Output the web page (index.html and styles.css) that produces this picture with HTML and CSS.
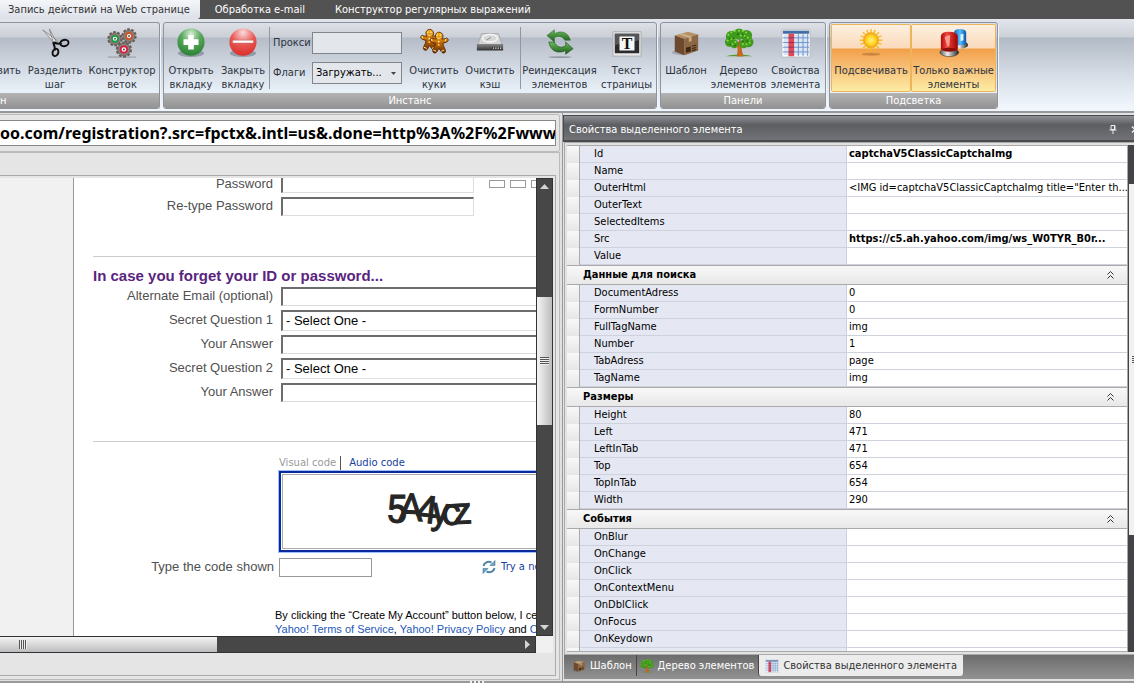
FILE: index.html
```html
<!DOCTYPE html>
<html lang="ru">
<head>
<meta charset="utf-8">
<title>Запись действий на Web странице</title>
<link rel="stylesheet" href="styles.css">
</head>
<body>
<svg class="defs" aria-hidden="true">
  <defs>
    <radialGradient id="gGreen" cx=".5" cy=".2" r=".9"><stop offset="0" stop-color="#d9efd9"/><stop offset=".4" stop-color="#5aa75c"/><stop offset="1" stop-color="#1f7a2a"/></radialGradient>
    <radialGradient id="gRed" cx=".5" cy=".15" r=".95"><stop offset="0" stop-color="#fbdcdc"/><stop offset=".45" stop-color="#e75a58"/><stop offset="1" stop-color="#d8241f"/></radialGradient>
    <radialGradient id="gSun"><stop offset="0" stop-color="#fff27a"/><stop offset=".6" stop-color="#ffd428"/><stop offset="1" stop-color="#f2a010"/></radialGradient>
    <linearGradient id="gCookie" x2="0" y2="1"><stop offset="0" stop-color="#ffb81c"/><stop offset=".5" stop-color="#c46a08"/><stop offset="1" stop-color="#6d2f04"/></linearGradient>
    <linearGradient id="gArrow" x2="0" y2="1"><stop offset="0" stop-color="#6cbc5a"/><stop offset="1" stop-color="#19591c"/></linearGradient>
    <linearGradient id="gLampR" x2="1"><stop offset="0" stop-color="#b00808"/><stop offset=".35" stop-color="#f04a40"/><stop offset="1" stop-color="#a00000"/></linearGradient>
    <linearGradient id="gLampB" x2="1"><stop offset="0" stop-color="#1268c0"/><stop offset=".5" stop-color="#58c0ff"/><stop offset="1" stop-color="#0a50a8"/></linearGradient>
    <linearGradient id="gBase" x2="1"><stop offset="0" stop-color="#555"/><stop offset=".4" stop-color="#eee"/><stop offset="1" stop-color="#222"/></linearGradient>
    <linearGradient id="gDrive" x2="0" y2="1"><stop offset="0" stop-color="#8a8a8a"/><stop offset="1" stop-color="#333"/></linearGradient>
    <symbol id="cog" viewBox="0 0 16 16">
      <circle cx="8" cy="8" r="6.6" fill="none" stroke="#665c58" stroke-width="2.2" stroke-dasharray="2.6 1.55"/>
      <circle cx="8" cy="8" r="6" fill="#8d7d77" stroke="#625752" stroke-width=".6"/>
      <circle cx="8" cy="8" r="3.9" fill="currentColor"/>
      <circle cx="8" cy="8" r="2.1" fill="#fff"/><circle cx="8" cy="8" r="1" fill="#555"/>
    </symbol>
    <symbol id="man" viewBox="0 0 22 28">
      <path d="M11 1.5c2.7 0 4.6 1.8 4.6 4.2 0 1.2-.4 2.2-1.2 3 1.6.3 3.3-.2 4.7-.8 2.1-.2 2.8 2.7.9 3.7-1.5.8-3 1.4-4.5 1.6.1 2 .7 3.6 1.8 5.4.8 1.5 1.6 3.3.5 4.4-1.6 1.5-3.5.4-4.3-1.2L11 18.500l-1.5 3.300c-.8 1.600-2.700 2.700-4.300 1.200-1.100-1.100-.3-2.900.5-4.400 1.100-1.800 1.700-3.400 1.800-5.400-1.500-.2-3-.8-4.500-1.600-1.900-1-1.200-3.900.9-3.700 1.400.6 3.100 1.100 4.700.8-.8-.8-1.200-1.800-1.200-3 0-2.400 1.900-4.200 3.600-4.200z" fill="url(#gCookie)" stroke="#5c2c06" stroke-width="1"/>
      <path d="M8.800 6.800c1 1.600 3.400 1.600 4.400 0" fill="none" stroke="#fff2b0" stroke-width=".9"/>
      <circle cx="9.300" cy="4.600" r=".8" fill="#fff2b0"/><circle cx="12.800" cy="4.600" r=".8" fill="#fff2b0"/>
      <circle cx="11" cy="11.500" r="1" fill="#fff2b0"/><circle cx="11" cy="15" r="1" fill="#ffd65c"/>
      <path d="M3.200 8.600l.8 2.600M18.800 8.600l-.8 2.600M5.200 20.500l3 1.300M16.800 20.500l-3 1.300" stroke="#fff2b0" stroke-width="1"/>
    </symbol>
    <symbol id="box" viewBox="0 0 32 32">
      <ellipse cx="11" cy="26" rx="10" ry="3" fill="#667" opacity=".35"/>
      <path d="M4 8l14-4 11 3-15 4.500z" fill="#b58f66"/>
      <path d="M4 8l10 3.500V29L4 25z" fill="#6d4a2d"/>
      <path d="M14 11.500L29 7v17L14 29z" fill="#8b6744"/>
      <path d="M8.500 6.700l3-.9 10.500 3.300-3 .9z" fill="#d2b48c"/><path d="M19 10l3-.9v5l-3 .9z" fill="#c9a67c"/>
      <path d="M16.500 21.500l4-1v4l-4 1zM22.500 19.500l4.500-1.200M22.500 22l4.500-1.200M22.500 24.300l4.500-1.200" fill="#3f2816" stroke="#3f2816" stroke-width="1.200"/>
    </symbol>
    <symbol id="tree" viewBox="0 0 32 32">
      <path d="M2 30c8-2 20-2 28 0z" fill="#4f9a25"/>
      <path d="M13.500 30c1-4 1.500-7 .5-11l-5-4 6 1 2-5 1.500 5 5-2-4.500 5.500c-.5 4 .5 7 2 10.500z" fill="#b8621c"/>
      <g fill="#3f9a1d"><circle cx="8" cy="9" r="6"/><circle cx="16" cy="6.500" r="6"/><circle cx="24" cy="8" r="6"/><circle cx="6" cy="15" r="5"/><circle cx="26" cy="15" r="5.500"/><circle cx="11" cy="17" r="4.500"/><circle cx="21" cy="17" r="4.500"/></g>
      <g fill="none" stroke="#83d63f" stroke-width="2" stroke-dasharray="2 2"><path d="M4 8q4-5 9-5M15 3q6-1 10 3M3 14q5-4 10-2M17 8q7-1 11 5M8 18q5-3 6-6M19 17q5 2 9-2"/></g>
      <g fill="none" stroke="#206b12" stroke-width="1.500" stroke-dasharray="2 3"><path d="M5 12q5-3 9 1M14 7q5-3 9 3M19 14q4 1 9-1M6 17q4 3 8 1"/></g>
      <path d="M14 30c2-4 1-7 .5-11l3 0c-.5 4 1 7 3 11z" fill="#c46a20"/>
    </symbol>
    <symbol id="grid" viewBox="0 0 32 32">
      <path d="M1 2h30v29H1z" fill="#fff" stroke="#b9bec8"/>
      <path d="M3 7h26v22H3z" fill="#dbe6f5"/>
      <path d="M2 3h28v3H2z" fill="#426da5"/>
      <path d="M8 6h6v24H8z" fill="#e04858"/>
      <path d="M2 10.500h28M2 15.500h28M2 20.500h28M2 25.500h28M18.500 6v24M23.500 6v24M28.500 6v24" stroke="#6b90c6" stroke-width="1"/>
      <path d="M8 10.500h6M8 15.500h6M8 20.500h6M8 25.500h6" stroke="#b01c34"/>
    </symbol>
  </defs>
</svg>
<div class="app">
  <nav class="tabs">
    <button class="tab tab-on" type="button">Запись действий на Web странице</button>
    <button class="tab" type="button">Обработка e-mail</button>
    <button class="tab" type="button">Конструктор регулярных выражений</button>
  </nav>

  <header class="ribbon">
    <section class="group group-cut">
      <div class="tools">
        <button class="tool w-cut" type="button"><span class="pic"></span>вить</button>
        <button class="tool w-split" type="button">
          <svg class="pic" viewBox="0 0 32 32"><path d="M3 2l13 15 3-3zM10 1l5 17 3-2z" fill="#eee" stroke="#777" stroke-width=".8"/><path d="M15 15q3 3 8 1M14 15q2 5 2 9" stroke="#111" stroke-width="2.200" fill="none"/><ellipse cx="26" cy="16" rx="4.500" ry="3.300" fill="none" stroke="#111" stroke-width="2" transform="rotate(-15 26 16)"/><ellipse cx="16.500" cy="26" rx="3" ry="4" fill="none" stroke="#111" stroke-width="2" transform="rotate(20 16.500 26)"/></svg>
          Разделить шаг</button>
        <button class="tool w-branch" type="button">
          <svg class="pic" viewBox="0 0 32 32"><path d="M1 31h30" stroke="#8e949c"/><g color="#c8552e"><use href="#cog" x="15" y="0" width="17" height="17"/></g><g color="#1c9a4a"><use href="#cog" x="0" y="3" width="17" height="17"/></g><g color="#d4204a"><use href="#cog" x="9" y="14" width="18" height="18"/></g></svg>
          Конструктор веток</button>
      </div>
      <h2 class="caption caption-cut">н</h2>
    </section>

    <section class="group">
      <div class="tools">
        <button class="tool w-open" type="button">
          <svg class="pic" viewBox="0 0 32 32"><ellipse cx="16" cy="27" rx="14" ry="4" fill="#456" opacity=".4"/><circle cx="16" cy="15" r="14.500" fill="url(#gGreen)"/><path d="M13 7.500h6V12h5v6h-5v5h-6v-5H8v-6h5z" fill="#fff"/></svg>
          Открыть вкладку</button>
        <button class="tool w-open" type="button">
          <svg class="pic" viewBox="0 0 32 32"><ellipse cx="16" cy="27" rx="14" ry="4" fill="#456" opacity=".4"/><circle cx="16" cy="15" r="14.500" fill="url(#gRed)"/><path d="M5 13h22v3H5z" fill="#fff" stroke="#b77" stroke-width=".6"/></svg>
          Закрыть вкладку</button>
        <div class="fields">
          <label for="proxy">Прокси</label><input id="proxy" type="text">
          <label for="flags">Флаги</label>
          <span class="combo"><select id="flags"><option>Загружать...</option></select><svg viewBox="0 0 5 3"><path d="M0 0h5L2.500 3z" fill="#444"/></svg></span>
        </div>
        <button class="tool w-clear" type="button">
          <svg class="pic" viewBox="0 0 32 32"><use href="#man" x="0" y="0" width="22" height="28"/><use href="#man" x="10" y="3" width="22" height="28"/></svg>
          Очистить куки</button>
        <button class="tool w-clear" type="button">
          <svg class="pic" viewBox="0 0 32 32"><path d="M7 6h18l4 12H3z" fill="#d4d6d8" stroke="#a5a8ac"/><ellipse cx="16" cy="11" rx="8" ry="4" fill="none" stroke="#f5f5f5" stroke-width="1.500"/><path d="M12 13l5-3" stroke="#888"/><path d="M2 17h28v7H2z" fill="url(#gDrive)"/><path d="M18 20.500h10v2H18z" fill="#111"/><path d="M19 21.500h9" stroke="#fff" stroke-width="1.500" stroke-dasharray="1.500 1"/></svg>
          Очистить кэш</button>
        <button class="tool w-index ruled" type="button">
          <svg class="pic" viewBox="0 0 32 32"><ellipse cx="16" cy="31" rx="13" ry="1" fill="#556" opacity=".45"/><path d="M10 2v4c8-4 15-1 17 7h-6c-2-4-6-5-11-3v5L2 8z" fill="url(#gArrow)" stroke="#286a27" stroke-width=".6"/><path d="M22 28v-4c-8 4-16 1-18-9h6c2 5 7 7 12 4v-4l8 7z" fill="url(#gArrow)" stroke="#164a18" stroke-width=".6"/></svg>
          Реиндексация элементов</button>
        <button class="tool w-text" type="button">
          <svg class="pic" viewBox="0 0 32 32"><path d="M1 4h30v26H1z" fill="#e8e8e8" stroke="#aaa"/><path d="M3 6h26v21H3z" fill="#2b2b2e"/><path d="M3 6h26v7L3 18z" fill="#55565a"/><path d="M8 9h16v15H8z" fill="#f7f7f7"/><text x="16" y="22" text-anchor="middle" class="glyph">T</text></svg>
          Текст страницы</button>
      </div>
      <h2 class="caption">Инстанс</h2>
    </section>

    <section class="group">
      <div class="tools">
        <button class="tool w-box" type="button"><svg class="pic"><use href="#box"/></svg>Шаблон</button>
        <button class="tool w-tree" type="button"><svg class="pic"><use href="#tree"/></svg>Дерево элементов</button>
        <button class="tool w-tree" type="button"><svg class="pic"><use href="#grid"/></svg>Свойства элемента</button>
      </div>
      <h2 class="caption">Панели</h2>
    </section>

    <section class="group">
      <div class="tools tools-hot">
        <button class="tool hot w-light" type="button" aria-pressed="true">
          <svg class="pic" viewBox="0 0 32 32"><ellipse cx="16" cy="28" rx="10" ry="1.500" fill="#a4642a" opacity=".5"/><path d="M16 1v24M4 13h24M7.500 4.500l17 17M24.500 4.500l-17 17M11.500 2l9 22M20.500 2l-9 22M5 8.500l22 9M5 17.500l22-9" stroke="#f6bc20" stroke-width="1.500"/><circle cx="16" cy="13" r="8" fill="url(#gSun)" stroke="#f3a91d"/></svg>
          Подсвечивать</button>
        <button class="tool hot w-only" type="button" aria-pressed="true">
          <svg class="pic" viewBox="0 0 32 32"><ellipse cx="23" cy="18" rx="8" ry="4" fill="url(#gBase)"/><path d="M16 5q0-4 6-4 7 0 7 4v12q-6 3-13 0z" fill="url(#gLampB)"/><path d="M23 7l3-1v7l-3 1z" fill="#e0f6ff"/><ellipse cx="11" cy="26" rx="10" ry="4.500" fill="url(#gBase)" stroke="#333" stroke-width=".6"/><path d="M2 9q0-5 8-5 10 0 10 5v14q-9 4-18 0z" fill="url(#gLampR)"/><path d="M6 10q3-3 6-2l-1 11-2 1z" fill="#ffb0a6" opacity=".8"/><ellipse cx="11" cy="23" rx="8" ry="2" fill="#8c0c0c"/></svg>
          Только важные элементы</button>
      </div>
      <h2 class="caption">Подсветка</h2>
    </section>
  </header>

  <main class="work">
    <section class="browser">
      <div class="address"><input type="text" aria-label="Адрес" value="oo.com/registration?.src=fpctx&amp;.intl=us&amp;.done=http%3A%2F%2Fwww"></div>
      <div class="frame">
        <div class="view">
          <div class="page">
            <form class="form">
              <div class="row row-first"><label for="pw">Password</label><input id="pw" class="short" type="password"><span class="meter"><i></i><i></i><i></i></span></div>
              <div class="row"><label for="pw2">Re-type Password</label><input id="pw2" class="short" type="password"></div>
              <h3 class="heading">In case you forget your ID or password...</h3>
              <div class="row"><label for="mail">Alternate Email (optional)</label><input id="mail" type="text"></div>
              <div class="row"><label for="q1">Secret Question 1</label><select id="q1"><option>- Select One -</option></select></div>
              <div class="row"><label for="a1">Your Answer</label><input id="a1" type="text"></div>
              <div class="row"><label for="q2">Secret Question 2</label><select id="q2"><option>- Select One -</option></select></div>
              <div class="row"><label for="a2">Your Answer</label><input id="a2" type="text"></div>
              <div class="verify">
                <p class="modes"><span>Visual code</span><a href="#audio">Audio code</a></p>
                <div class="captcha"><svg viewBox="0 0 292 75" role="img" aria-label="5A4ycz"><g class="code"><text x="102" y="49">5</text><text x="115" y="47" transform="rotate(3 127 40)">A</text><text x="133" y="49" transform="rotate(7 143 40)">4</text><text x="149" y="50" transform="rotate(6 158 40)">y</text><text x="159" y="51" transform="rotate(-4 172 40)">c</text><text x="171" y="50" transform="rotate(-3 182 40)">z</text></g></svg></div>
              </div>
              <div class="row row-code"><label for="code">Type the code shown</label><input id="code" class="code-box" type="text">
                <a class="again" href="#new"><svg viewBox="0 0 14 14"><path d="M1.500 6C2 2.500 6 .8 9.500 2.500M12.500 8C12 11.500 8 13.200 4.500 11.500" fill="none" stroke="#4f86a8" stroke-width="2"/><path d="M13 .5v5H8zM1 13.500v-5h5z" fill="#6fa3c0" stroke="#3d7697" stroke-width=".6"/></svg>Try a ne</a></div>
              <p class="terms">By clicking the “Create My Account” button below, I ce<br><a href="#tos">Yahoo! Terms of Service</a>, <a href="#privacy">Yahoo! Privacy Policy</a> and <a href="#comm">C</a></p>
            </form>
          </div>
          <div class="vbar"><svg class="up" viewBox="0 0 9 5"><path d="M0 5h9L4.500 0z"/></svg><div class="vthumb"><i></i></div><svg class="down" viewBox="0 0 9 5"><path d="M0 0h9L4.500 5z"/></svg></div>
          <div class="hbar"><div class="hthumb"><i></i></div><svg class="right" viewBox="0 0 5 9"><path d="M0 0v9l5-4.500z"/></svg></div>
        </div>
      </div>
    </section>

    <section class="props">
      <h2 class="title"><span>Свойства выделенного элемента</span>
        <button type="button" aria-label="Закрепить"><svg viewBox="0 0 8 9"><path d="M2 .5h4v4H2zM5.500 .5v4M.5 5h7M4 5v4" fill="none" stroke="#eee"/></svg></button>
        <button type="button" class="close" aria-label="Закрыть"><svg viewBox="0 0 8 8"><path d="M1 1l6 6M7 1L1 7" stroke="#eee" stroke-width="1.500"/></svg></button></h2>
      <div class="sheet">
        <div class="scroll">
          <table class="list">
            <colgroup><col class="c-gutter"><col class="c-name"><col></colgroup>
            <tbody>
              <tr><td></td><th scope="row">Id</th><td class="strong">captchaV5ClassicCaptchaImg</td></tr>
              <tr><td></td><th scope="row">Name</th><td></td></tr>
              <tr><td></td><th scope="row">OuterHtml</th><td>&lt;IMG id=captchaV5ClassicCaptchaImg title="Enter th...</td></tr>
              <tr><td></td><th scope="row">OuterText</th><td></td></tr>
              <tr><td></td><th scope="row">SelectedItems</th><td></td></tr>
              <tr><td></td><th scope="row">Src</th><td class="strong">https://c5.ah.yahoo.com/img/ws_W0TYR_B0r...</td></tr>
              <tr><td></td><th scope="row">Value</th><td></td></tr>
            </tbody>
            <tbody>
              <tr class="cat"><th colspan="3" scope="rowgroup"><button type="button">Данные для поиска<svg viewBox="0 0 7 8"><path d="M.5 3.500l3-3 3 3M.5 7.500l3-3 3 3"/></svg></button></th></tr>
              <tr><td></td><th scope="row">DocumentAdress</th><td>0</td></tr>
              <tr><td></td><th scope="row">FormNumber</th><td>0</td></tr>
              <tr><td></td><th scope="row">FullTagName</th><td>img</td></tr>
              <tr><td></td><th scope="row">Number</th><td>1</td></tr>
              <tr><td></td><th scope="row">TabAdress</th><td>page</td></tr>
              <tr><td></td><th scope="row">TagName</th><td>img</td></tr>
            </tbody>
            <tbody>
              <tr class="cat"><th colspan="3" scope="rowgroup"><button type="button">Размеры<svg viewBox="0 0 7 8"><path d="M.5 3.500l3-3 3 3M.5 7.500l3-3 3 3"/></svg></button></th></tr>
              <tr><td></td><th scope="row">Height</th><td>80</td></tr>
              <tr><td></td><th scope="row">Left</th><td>471</td></tr>
              <tr><td></td><th scope="row">LeftInTab</th><td>471</td></tr>
              <tr><td></td><th scope="row">Top</th><td>654</td></tr>
              <tr><td></td><th scope="row">TopInTab</th><td>654</td></tr>
              <tr><td></td><th scope="row">Width</th><td>290</td></tr>
            </tbody>
            <tbody>
              <tr class="cat"><th colspan="3" scope="rowgroup"><button type="button">События<svg viewBox="0 0 7 8"><path d="M.5 3.500l3-3 3 3M.5 7.500l3-3 3 3"/></svg></button></th></tr>
              <tr><td></td><th scope="row">OnBlur</th><td></td></tr>
              <tr><td></td><th scope="row">OnChange</th><td></td></tr>
              <tr><td></td><th scope="row">OnClick</th><td></td></tr>
              <tr><td></td><th scope="row">OnContextMenu</th><td></td></tr>
              <tr><td></td><th scope="row">OnDblClick</th><td></td></tr>
              <tr><td></td><th scope="row">OnFocus</th><td></td></tr>
              <tr><td></td><th scope="row">OnKeydown</th><td></td></tr>
              <tr><td></td><th scope="row"></th><td></td></tr>
            </tbody>
          </table>
        </div>
        <div class="edge"><div class="ethumb"><i></i></div></div>
      </div>
      <nav class="docks">
        <button class="dock" type="button"><svg><use href="#box"/></svg>Шаблон</button>
        <button class="dock" type="button"><svg><use href="#tree"/></svg>Дерево элементов</button>
        <button class="dock dock-on" type="button"><svg><use href="#grid"/></svg>Свойства выделенного элемента</button>
      </nav>
    </section>
  </main>
  <footer class="grip"><i></i></footer>
</div>
</body>
</html>
```
FILE: styles.css
```css
* { box-sizing: border-box; }
html, body { height: 100%; }
body { margin: 0; overflow: hidden; font: 11px/14px "DejaVu Sans Condensed", "Noto Sans", sans-serif; color: #1e1e1e; background: #e5e5e5; }
button, input, select { font: inherit; color: inherit; margin: 0; padding: 0; border: 0; border-radius: 0; background: none; appearance: none; }
h2, h3, p { margin: 0; font: inherit; }
svg { flex: none; display: block; }
i { display: block; }
.defs { position: absolute; width: 0; height: 0; }
.app { display: flex; flex-direction: column; height: 100vh; }

/* top tabs */
.tabs { display: flex; flex: none; height: 19px; background: #525252; }
.tab { padding: 0 15px; color: #fff; white-space: nowrap; }
.tab-on { padding: 0 10px 0 8px; color: #333; background: linear-gradient(#f4f6f9, #dde1e8); border-radius: 0 0 3px 0; }

/* ribbon */
.ribbon { display: flex; flex: none; gap: 3px; height: 94px; padding: 3px 0 2px; background: linear-gradient(#e2e6ec, #cdd1d8 18px, #b2bac5 19px, #d5dce5 55px, #f0f6fc 88px); border-bottom: 2px solid #94989c; }
.group { flex: none; display: flex; flex-direction: column; border: 1px solid #8d949e; border-radius: 3px; overflow: hidden; background: linear-gradient(#dde1e6, #cbcfd6 14px, #b5bcc7 15px, #d3dae3 45px, #e9f1f9 70px); box-shadow: 1px 1px 0 #f2f5f8; }
.group-cut { width: 160px; border-left: 0; border-radius: 0 3px 3px 0; }
.group-cut .tools { justify-content: flex-end; }
.tools { display: flex; flex: none; height: 70px; padding: 0 1px; }
.tool { display: flex; flex-direction: column; align-items: center; justify-content: flex-start; flex: none; padding: 4px 0 0; color: #2c3440; line-height: 14px; text-align: center; }
.pic { width: 30px; height: 32px; margin-bottom: 5px; flex: none; }
.caption { flex: none; height: 15px; line-height: 16px; text-align: center; color: #fff; background: linear-gradient(#b4b4b4, #929292); }
.caption-cut { text-align: left; }
.w-cut { width: 30px; } .w-split { width: 62px; } .w-branch { width: 72px; }
.w-open { width: 52px; } .w-clear { width: 56px; } .w-index { width: 78px; } .w-text { width: 57px; }
.w-box { width: 48px; } .w-tree { width: 57px; }
.w-light { width: 80px; } .w-only { width: 85px; }
.ruled { border-left: 1px solid #8f97a3; height: 62px; margin-top: 4px; padding-top: 0; margin-left: 2px; }
.fields { display: grid; grid-template-columns: 37px 90px; gap: 8px 2px; align-items: center; align-content: start; height: 62px; margin: 4px 4px 0 0; padding: 5px 0 0 3px; border-left: 1px solid #8f97a3; color: #2c3440; }
.fields input, .fields select { width: 90px; height: 22px; padding: 0 3px; border: 1px solid #82868c; background: #e3e7ec; color: #000; }
.combo { display: flex; align-items: center; }
.combo svg { width: 5px; height: 3px; margin-left: -11px; }
.tools-hot { padding: 1px; gap: 0; }
.hot { padding-top: 2px; border: 1px solid #efb45a; border-radius: 2px; background: linear-gradient(#fdf0df, #fadabb 23px, #f2a04a 24px, #f8c47c 45px, #fff0a8 68px); }
.glyph { font: bold 17px "Liberation Serif", serif; fill: #111; }

/* workspace */
.work { flex: 1; min-height: 0; display: grid; grid-template-columns: minmax(0, 562fr) minmax(0, 572fr); background: #e0e0e0; }
.browser { display: flex; flex-direction: column; min-width: 0; min-height: 0; padding: 1px 2px 1px 0; }
.address { padding: 5px 3px 5px 0; border: 1px solid #bbb; border-left: 0; border-radius: 0 3px 3px 0; background: #e5e5e5; }
.address input { display: block; width: 100%; height: 26px; border: 1px solid #888; border-left: 0; background: #fff; font: bold 16px/22px "Noto Sans", "DejaVu Sans Condensed", sans-serif; color: #000; }
.frame { flex: 1; min-height: 0; padding: 22px 3px 3px 0; border: 1px solid #bbb; border-left: 0; background: #e5e5e5; }
.view { display: grid; grid-template: minmax(0, 1fr) 17px / minmax(0, 1fr) 17px; height: 100%; padding: 2px 2px 22px 0; border: 1px solid #aaa; border-left: 0; }
.page { overflow: hidden; padding-left: 73px; background: #f1f1f1; }
.form { width: 760px; min-height: 100%; padding-left: 19px; border-left: 1px solid #999; background: #fff; color: #505050; font: 13px/18px "Liberation Sans", Arial, sans-serif; }
.row { display: grid; grid-template-columns: 180px 385px; column-gap: 8px; align-items: center; min-height: 24px; }
.row label { text-align: right; }
.row input, .row select { width: 100%; height: 19px; padding: 0 3px; border: 1px solid #ddd; border-top: 2px solid #6c6c6c; border-left: 2px solid #6c6c6c; background: #fff; color: #000; }
.row select { height: 21px; }
.row .short { width: 193px; }
.row-first { grid-template-columns: 180px 193px auto; min-height: 21px; margin-top: -5px; }
.meter { display: flex; gap: 5px; padding-left: 7px; }
.meter i { width: 16px; height: 8px; border: 1px solid #999; }
.heading { margin-top: 38px; padding-top: 11px; border-top: 1px solid #ccc; font-size: 15px; line-height: 16px; font-weight: bold; color: #5a2480; }
.verify { margin-top: 37px; padding: 14px 0 0 186px; border-top: 1px solid #ccc; }
.modes { display: flex; gap: 8px; font: 10px/14px "DejaVu Sans", sans-serif; color: #999; }
.modes span { padding-right: 4px; border-right: 1px solid #555; }
a { color: #1642a0; text-decoration: none; }
.captcha { width: 298px; margin-top: 1px; padding: 1px; border: 2px solid #0a2a9c; box-shadow: 0 0 0 1px #9cc0ff; }
.captcha svg { width: 292px; height: 75px; border: 1px solid #aaa; border-right: 0; }
.code { font: 39px Roboto, "DejaVu Sans Condensed", sans-serif; fill: #262626; stroke: #262626; stroke-width: 1px; }
.row-code { grid-template-columns: 181px 93px auto; column-gap: 5px; margin-top: 3px; }
.row .code-box { border: 1px solid #999; }
.again { display: flex; align-items: center; gap: 5px; padding-left: 105px; font: 10px/14px "DejaVu Sans", sans-serif; }
.again svg { width: 14px; height: 14px; }
.terms { margin-top: 29px; padding-left: 182px; font-size: 11px; line-height: 14px; color: #000; white-space: nowrap; }
.terms a { color: #2458b8; }

/* scroll bars */
.vbar, .hbar { display: flex; align-items: center; background: #474747; fill: #d4d4d4; }
.vbar { flex-direction: column; padding: 5px 0; border: 1px solid #333; }
.vbar svg { width: 9px; height: 5px; }
.vthumb { flex: 0 0 128px; width: 15px; margin: 108px 0 auto; display: flex; align-items: center; justify-content: center; background: linear-gradient(90deg, #f4f4f4, #bcbcbf); }
.vthumb i { width: 9px; height: 8px; background: repeating-linear-gradient(#555 0 1px, #eee 1px 2px); }
.hbar { justify-content: space-between; padding-right: 5px; border: 1px solid #333; border-left: 0; }
.hbar svg { width: 5px; height: 9px; }
.hthumb { width: 41%; height: 15px; padding: 3px 19px; background: linear-gradient(#f4f4f4, #bcbcbf); }
.hthumb i { width: 8px; height: 9px; background: repeating-linear-gradient(90deg, #555 0 1px, #eee 1px 2px); }
.view::after { content: ""; background: #f0f0f0; }

/* property panel */
.props { display: flex; flex-direction: column; min-width: 0; min-height: 0; padding: 2px 0 2px; border-left: 1px solid #999; background: #e2e2e2; overflow: hidden; }
.title { display: flex; align-items: center; gap: 14px; height: 27px; padding: 3px 0 0 5px; color: #fff; background: linear-gradient(#8f9095, #5d5e62 9px, #727377 24px); border: 1px solid #4b4b4f; border-right: 0; border-width: 1px 0 2px 1px; }
.title span { flex: 1; white-space: nowrap; }
.title svg { width: 8px; height: 9px; }
.title .close { width: 3px; overflow: hidden; }
.sheet { flex: 1; min-height: 0; display: flex; margin-left: 1px; padding: 2px 0 2px 2px; border: 1px solid #aaa; border-right: 0; }
.scroll { flex: 1; min-width: 0; overflow: hidden; background: #fff; border: 1px solid #aaa; border-width: 1px 1px 1px 0; }
.list { width: 100%; table-layout: fixed; border-collapse: separate; border-spacing: 0; color: #000; }
.c-gutter { width: 13px; } .c-name { width: 267px; }
.list td, .list th { height: 17px; padding: 0 0 0 2px; line-height: 16px; font-weight: normal; text-align: left; white-space: nowrap; overflow: hidden; border-bottom: 1px solid #cdd2dc; }
.list td:first-child { padding: 0; border-right: 1px solid #aaa; border-bottom: 0; background: linear-gradient(#f8f8f8, #e6e6e6); }
.list th { padding-left: 14px; background: #e5e8f2; border-right: 1px solid #cdd2dc; }
.list .cat th { height: 20px; padding: 0; border: 1px solid #aaa; border-width: 1px 0; background: linear-gradient(#f8f8f8, #e8e8e8); }
.list .strong { font-weight: bold; }
.cat button { display: flex; justify-content: space-between; align-items: center; width: 100%; padding: 0 13px 0 16px; font-weight: bold; }
.cat svg { width: 7px; height: 8px; fill: none; stroke: #333; }
.edge { width: 6px; padding-top: 39px; overflow: hidden; background: #434347; }
.ethumb { display: flex; align-items: center; justify-content: flex-end; height: 351px; margin-left: 1px; background: #f1f1f1; }
.ethumb i { width: 2px; height: 8px; background: repeating-linear-gradient(#555 0 1px, #eee 1px 2px); }
.docks { display: flex; height: 24px; margin-left: 1px; padding: 0 0 3px 5px; background: linear-gradient(#6c6c6c, #929292); }
.dock { display: flex; align-items: center; gap: 4px; padding: 0 4px 0 3px; color: #fff; white-space: nowrap; }
.dock + .dock { border-left: 1px solid #444; }
.dock svg { width: 14px; height: 14px; }
.dock-on { padding: 0 6px; color: #333; background: #ececec; border-radius: 0 0 3px 3px; }
.grip { display: flex; justify-content: center; height: 2px; background: #999; }
.grip i { width: 14px; height: 2px; margin-right: 180px; background: repeating-linear-gradient(90deg, #eee 0 2px, #888 2px 4px); }
```
